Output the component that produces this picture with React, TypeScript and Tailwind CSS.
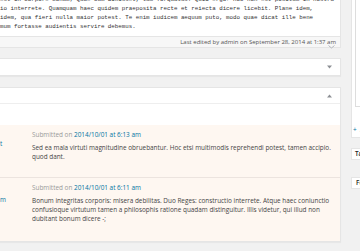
import React from 'react'

const editorLines = [
  'est in corpore bonum; Quae cum dixisset, tum Torquatus: Quid ergo? Hoc non est positum in nostra',
  'io interrete. Quamquam haec quidem praeposita recte et reiecta dicere licebit. Plane idem,',
  'idem, qua fieri nulla maior potest. Te enim iudicem aequum puto, modo quae dicat ille bene',
  'mum fortasse audientis servire debemus.',
]

const comments = [
  {
    edge: 't',
    date: '2014/10/01 at 6:13 am',
    lines: ['Sed ea mala virtuti magnitudine obruebantur. Hoc etsi multimodis reprehendi potest, tamen accipio.', 'quod dant.'],
    height: 'h-[53px] border-b border-[#ece4df]',
  },
  {
    edge: 'm',
    date: '2014/10/01 at 6:11 am',
    lines: [
      'Bonum integritas corporis: misera debilitas. Duo Reges: constructio interrete. Atque haec coniunctio',
      'confusioque virtutum tamen a philosophis ratione quadam distinguitur. Illis videtur, qui illud non',
      'dubitant bonum dicere -;',
    ],
    height: 'h-[63px]',
  },
]

function Triangle({ up }: { up?: boolean }) {
  return (
    <svg width="5" height="4" viewBox="0 0 5 4" className="text-[#8c8f94]">
      {up ? <path d="M0 3.5 L2.5 0.5 L5 3.5 Z" fill="currentColor" /> : <path d="M0 0.5 L5 0.5 L2.5 3.5 Z" fill="currentColor" />}
    </svg>
  )
}

export default function App() {
  return (
    <div className="w-[360px] h-[251px] overflow-hidden bg-[#f1f1f1] flex font-['Open_Sans',sans-serif]">
      <div className="w-[341px] shrink-0 flex flex-col">
        {/* editor */}
        <div className="h-[36px] overflow-hidden bg-white border-r border-[#e5e5e5] font-['Liberation_Mono',monospace] text-[5.8px] leading-[9px] text-[#333] whitespace-pre">
          <div className="-mt-[5px]">
            {editorLines.map((l, i) => (
              <div key={i}>{l}</div>
            ))}
          </div>
        </div>

        <div className="relative h-[12px] bg-[#f7f7f7] border border-l-0 border-[#e5e5e5] flex items-center justify-end pr-[4px] text-[6px] text-[#555] whitespace-nowrap">
          Last edited by admin on September 28, 2014 at 1:37 am
          <svg width="7" height="4" viewBox="0 0 7 4" className="absolute right-[5px] -bottom-[2px]">
            <path d="M0.5 0.5 L3.5 3 L6.5 0.5" fill="none" stroke="#b4b9be" strokeWidth="1" />
          </svg>
        </div>

        {/* collapsed box */}
        <div className="mt-[10px] h-[18px] bg-white border border-l-0 border-[#e5e5e5] shadow-[0_1px_1px_rgba(0,0,0,0.04)] flex items-center justify-end pr-[8px]">
          <Triangle />
        </div>

        {/* comments box */}
        <div className="mt-[11px] bg-white border border-l-0 border-[#e5e5e5] shadow-[0_1px_1px_rgba(0,0,0,0.04)] flex flex-col">
          <div className="h-[16px] border-b border-[#eee] flex items-center justify-end pr-[8px]">
            <Triangle up />
          </div>
          <div className="h-[21px]" />
          {comments.map((c, i) => (
            <div key={i} className={`${c.height} bg-[#fef7f1] flex text-[6.4px] leading-[9px]`}>
              <div className="w-[32px] shrink-0 text-[#0074a2] pt-[13px]">
                <div className={i === 0 ? 'mt-[1px]' : 'mt-[4px]'}>{c.edge}</div>
              </div>
              <div className="pt-[5px] whitespace-nowrap">
                <div className="text-[#999]">
                  Submitted on <span className="text-[#0074a2]">{c.date}</span>
                </div>
                <div className="mt-[4px] text-[#444]">
                  {c.lines.map((l, j) => (
                    <div key={j}>{l}</div>
                  ))}
                </div>
              </div>
            </div>
          ))}
        </div>
      </div>

      {/* sidebar */}
      <div className="ml-[10px] flex-1 min-w-0 overflow-hidden flex flex-col">
        <div className="h-[138px] bg-white border border-t-0 border-r-0 border-[#e5e5e5] w-[40px]">
          <div className="ml-[3px] h-[107px] border-l border-b border-[#ddd]" />
          <div className="mt-[18px] pl-[1px] text-[6.4px] leading-[9px] text-[#0074a2] whitespace-nowrap">+&nbsp;&nbsp;Add New Category</div>
        </div>
        <div className="mt-[10px] h-[12px] w-[40px] bg-white border border-r-0 border-[#e5e5e5] flex items-center pl-[3px] text-[6.4px] font-semibold text-[#222] whitespace-nowrap">
          Tags
        </div>
        <div className="mt-[17px] h-[12px] w-[40px] bg-white border border-r-0 border-[#e5e5e5] flex items-center pl-[4px] text-[6.4px] font-semibold text-[#222] whitespace-nowrap">
          Featured Image
        </div>
      </div>
    </div>
  )
}
